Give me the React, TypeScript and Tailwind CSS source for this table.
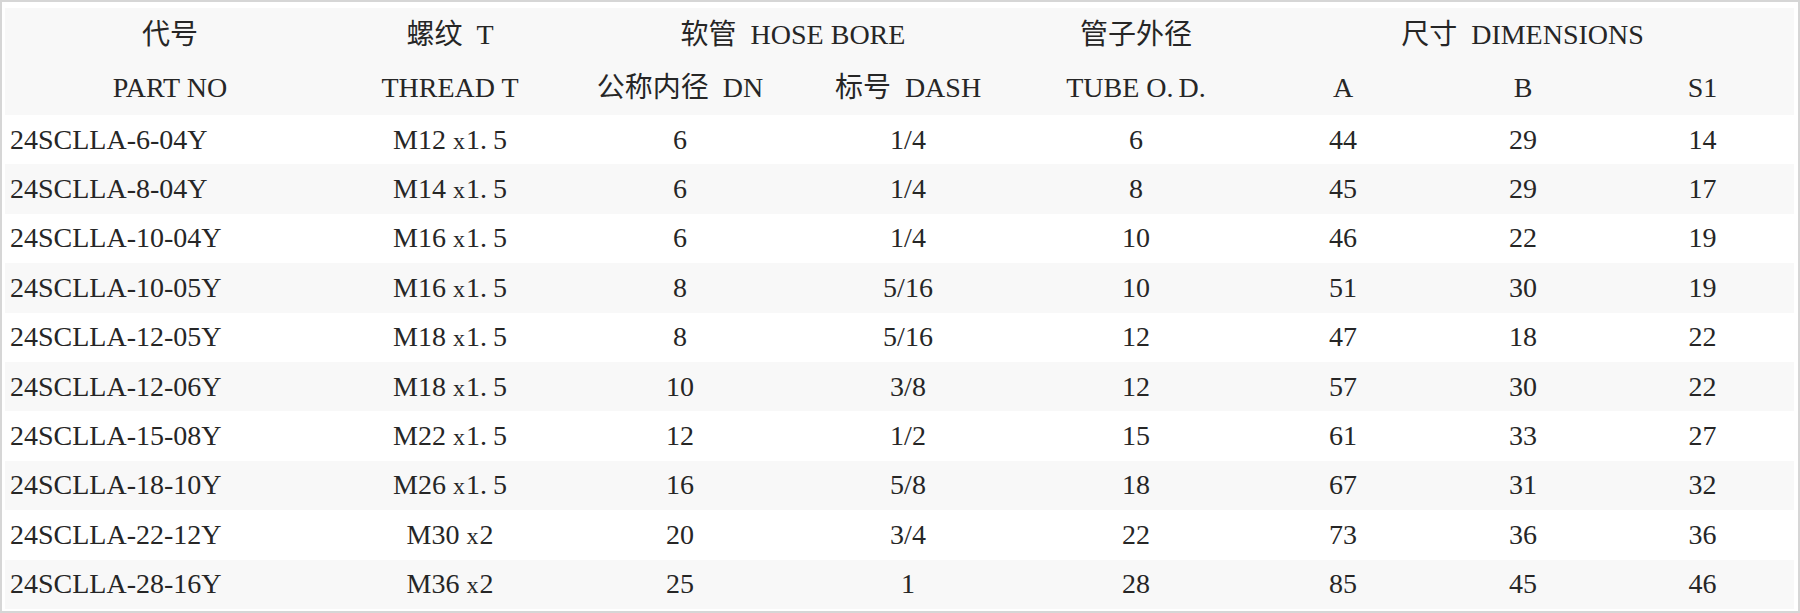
const rows = [
  ["24SCLLA-6-04Y", "M12 x 1.5", "6", "1/4", "6", "44", "29", "14"],
  ["24SCLLA-8-04Y", "M14 x 1.5", "6", "1/4", "8", "45", "29", "17"],
  ["24SCLLA-10-04Y", "M16 x 1.5", "6", "1/4", "10", "46", "22", "19"],
  ["24SCLLA-10-05Y", "M16 x 1.5", "8", "5/16", "10", "51", "30", "19"],
  ["24SCLLA-12-05Y", "M18 x 1.5", "8", "5/16", "12", "47", "18", "22"],
  ["24SCLLA-12-06Y", "M18 x 1.5", "10", "3/8", "12", "57", "30", "22"],
  ["24SCLLA-15-08Y", "M22 x 1.5", "12", "1/2", "15", "61", "33", "27"],
  ["24SCLLA-18-10Y", "M26 x 1.5", "16", "5/8", "18", "67", "31", "32"],
  ["24SCLLA-22-12Y", "M30 x 2", "20", "3/4", "22", "73", "36", "36"],
  ["24SCLLA-28-16Y", "M36 x 2", "25", "1", "28", "85", "45", "46"],
];

// thread sizes like "M12 x 1.5" — the source uses a wide full stop, so pad it
function Thread({ value }: { value: string }) {
  const [m, p] = value.split(" x ");
  const [whole, frac] = p.split(".");
  return (
    <span>
      {m}
      <span className="ml-[7px] mr-[1px] text-[24px]">x</span>
      {whole}
      {frac && (
        <>
          <span className="mr-[6px]">.</span>
          {frac}
        </>
      )}
    </span>
  );
}

export default function App() {
  return (
    <div className="w-[1800px] h-[613px] bg-white border-2 border-[#d6d6d6] pt-[6px] pl-[3px] pr-[4px] pb-[2px] text-[#262626] text-[28px] font-['Liberation_Serif','Noto_Sans_CJK_SC',serif]">
      <table className="w-[1789px] table-fixed border-collapse">
        <colgroup>
          <col className="w-[330px]" />
          <col className="w-[230px]" />
          <col className="w-[230px]" />
          <col className="w-[226px]" />
          <col className="w-[230px]" />
          <col className="w-[184px]" />
          <col className="w-[176px]" />
          <col className="w-[183px]" />
        </colgroup>
        <thead className="bg-[#f8f8f8]">
          <tr className="h-[53.5px]">
            <th className="font-normal text-center">代号</th>
            <th className="font-normal text-center">螺纹&nbsp; T</th>
            <th colSpan={2} className="font-normal text-center">
              软管&nbsp; HOSE BORE
            </th>
            <th className="font-normal text-center">管子外径</th>
            <th colSpan={3} className="font-normal text-center">
              尺寸&nbsp; DIMENSIONS
            </th>
          </tr>
          <tr className="h-[53.5px]">
            <th className="font-normal text-center">PART NO</th>
            <th className="font-normal text-center">THREAD T</th>
            <th className="font-normal text-center">公称内径&nbsp; DN</th>
            <th className="font-normal text-center">标号&nbsp; DASH</th>
            <th className="font-normal text-center">
              TUBE O<span className="mr-[5px]">.</span>D.
            </th>
            <th className="font-normal text-center">A</th>
            <th className="font-normal text-center">B</th>
            <th className="font-normal text-center">S1</th>
          </tr>
        </thead>
        <tbody>
          {rows.map((r, i) => (
            <tr key={r[0]} className={i % 2 === 1 ? "h-[49.4px] bg-[#f8f8f8]" : "h-[49.4px] bg-white"}>
              <td className="pl-[5px] text-left">{r[0]}</td>
              <td className="text-center">
                <Thread value={r[1]} />
              </td>
              {r.slice(2).map((c, j) => (
                <td key={j} className="text-center">
                  {c}
                </td>
              ))}
            </tr>
          ))}
        </tbody>
      </table>
    </div>
  );
}
